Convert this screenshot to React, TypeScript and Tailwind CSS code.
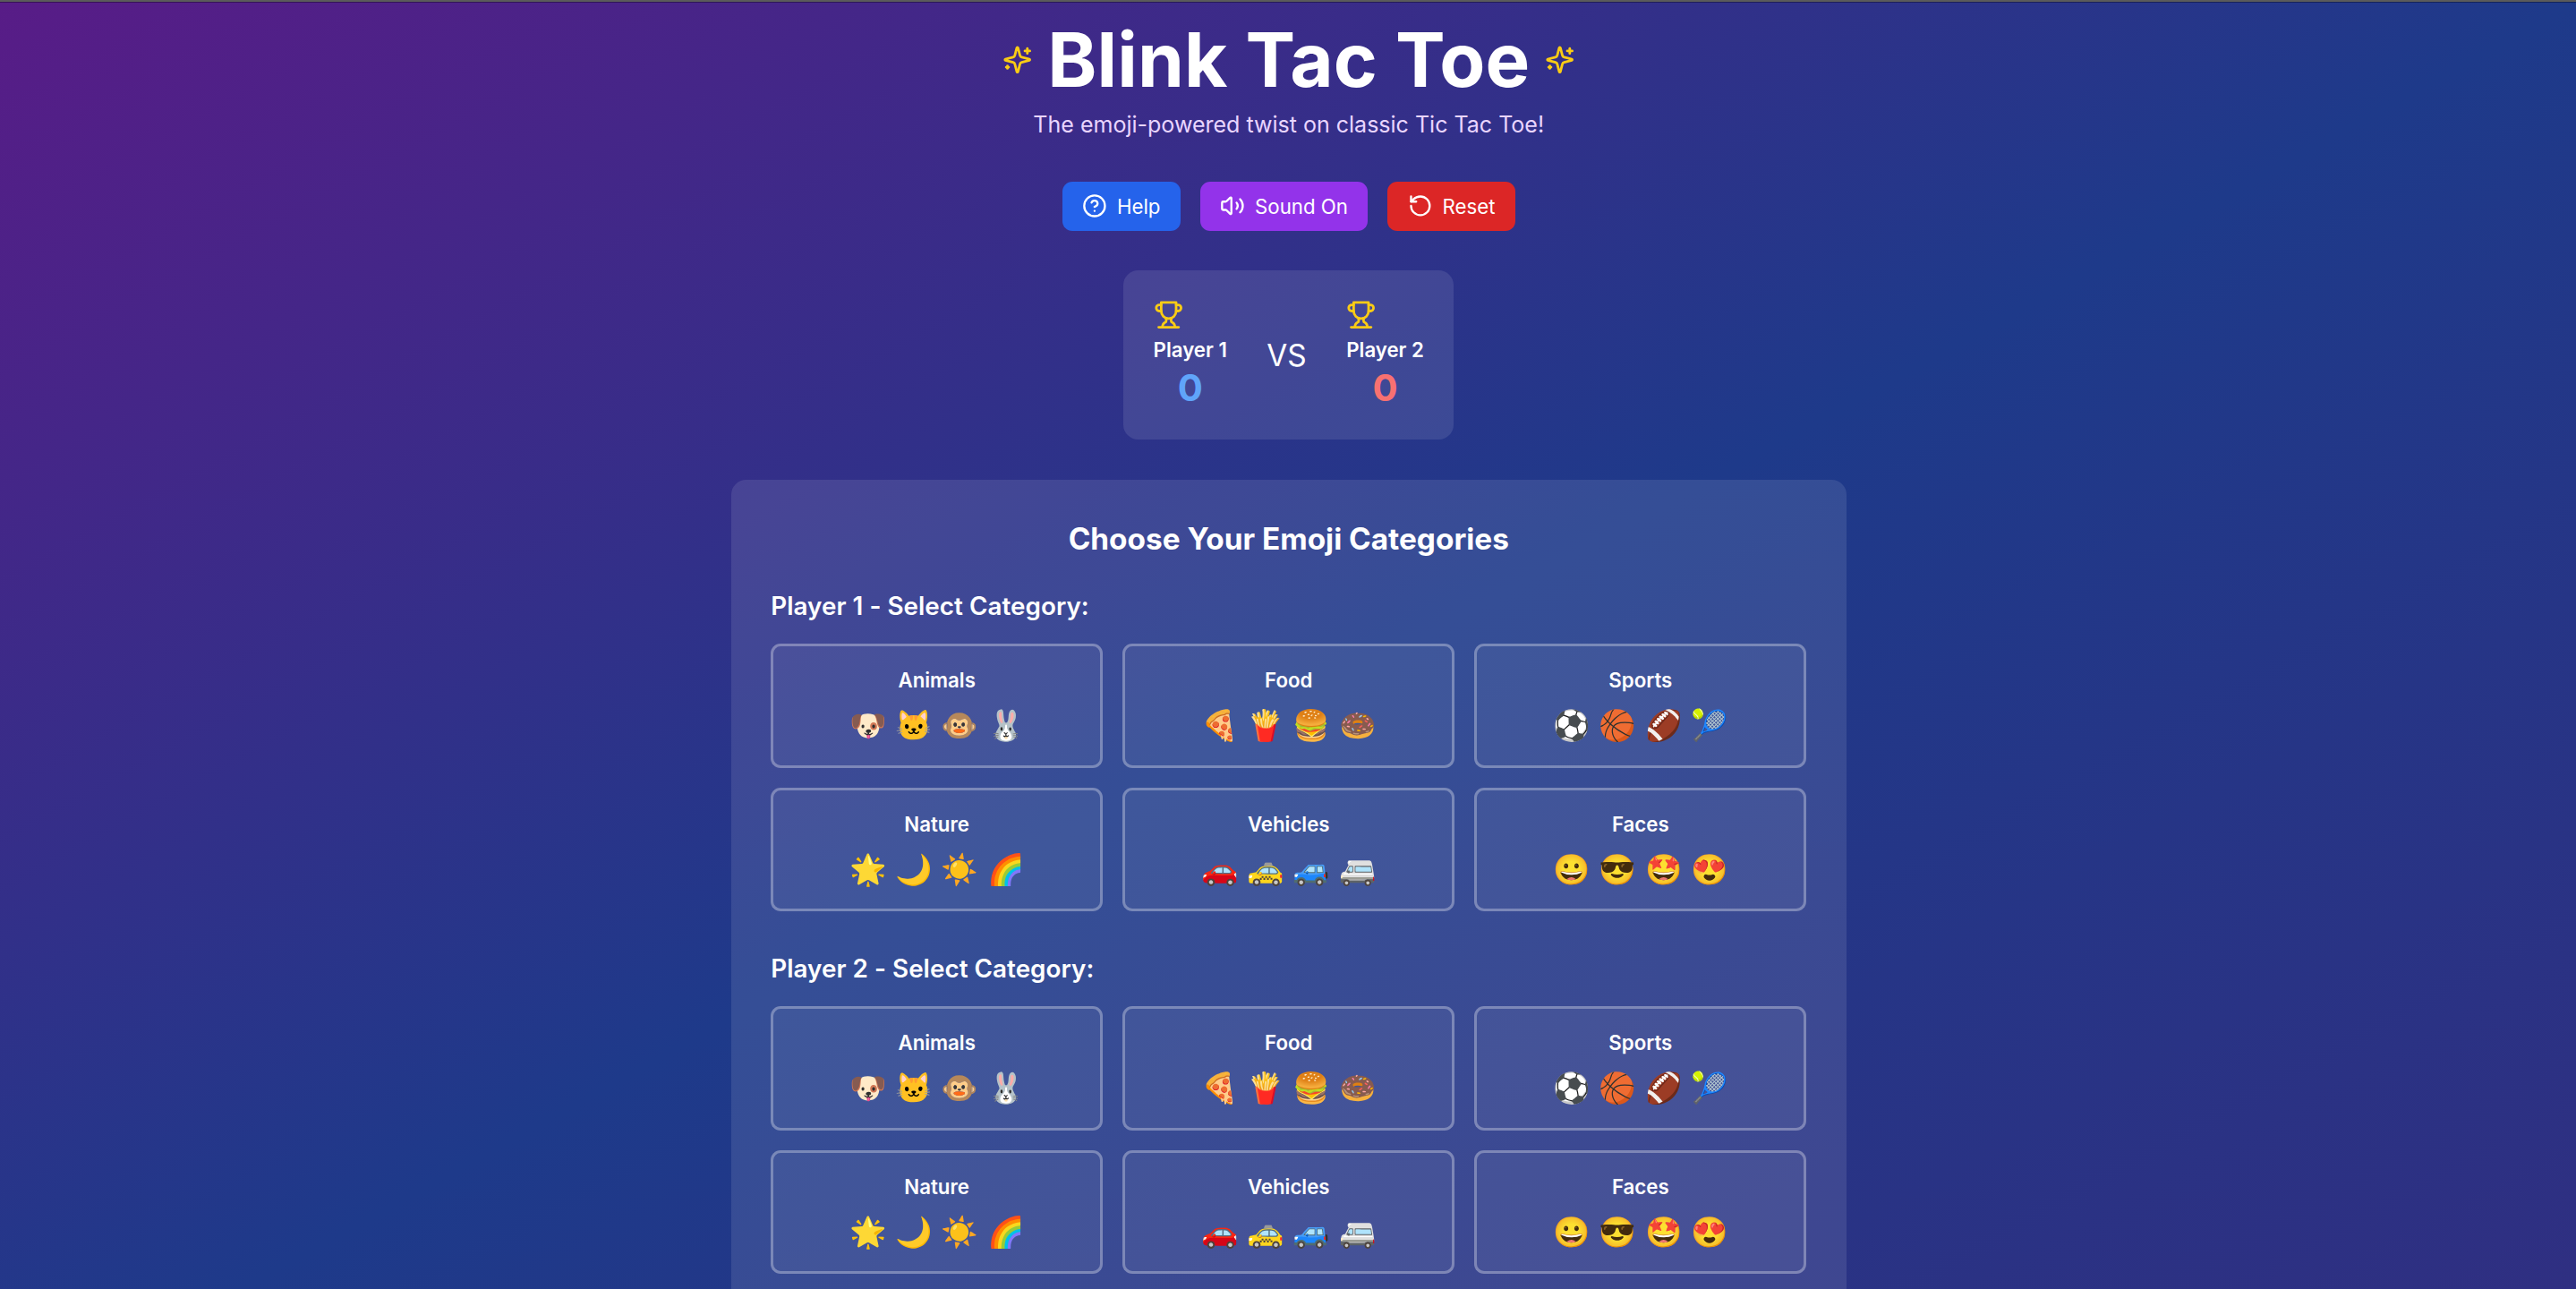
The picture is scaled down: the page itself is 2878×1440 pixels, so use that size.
import { CircleHelp, Volume2, RotateCcw } from "lucide-react";

const CATEGORIES = [
  { name: "Animals", emojis: ["🐶", "🐱", "🐵", "🐰"] },
  { name: "Food", emojis: ["🍕", "🍟", "🍔", "🍩"] },
  { name: "Sports", emojis: ["⚽", "🏀", "🏈", "🎾"] },
  { name: "Nature", emojis: ["🌟", "🌙", "☀️", "🌈"] },
  { name: "Vehicles", emojis: ["🚗", "🚕", "🚙", "🚐"] },
  { name: "Faces", emojis: ["😀", "😎", "🤩", "😍"] },
];

function Sparkles() {
  return (
    <svg viewBox="0 0 24 24" fill="none" stroke="currentColor" strokeWidth="2" strokeLinecap="round" strokeLinejoin="round" className="h-6 w-6 text-[#facc15]">
      <path d="M9.937 15.5A2 2 0 0 0 8.5 14.063l-6.135-1.582a.5.5 0 0 1 0-.962L8.5 9.936A2 2 0 0 0 9.937 8.5l1.582-6.135a.5.5 0 0 1 .963 0L14.063 8.5A2 2 0 0 0 15.5 9.937l6.135 1.581a.5.5 0 0 1 0 .964L15.5 14.063a2 2 0 0 0-1.437 1.437l-1.582 6.135a.5.5 0 0 1-.963 0z" />
      <path d="M20 3v4" />
      <path d="M22 5h-4" />
      <path d="M4 17v2" />
      <path d="M5 18H3" />
    </svg>
  );
}

function Trophy() {
  return (
    <svg viewBox="0 0 24 24" fill="none" stroke="currentColor" strokeWidth="2" strokeLinecap="round" strokeLinejoin="round" className="mb-1 h-6 w-6 text-[#facc15]">
      <path d="M6 9H4.5a2.5 2.5 0 0 1 0-5H6" />
      <path d="M18 9h1.5a2.5 2.5 0 0 0 0-5H18" />
      <path d="M4 22h16" />
      <path d="M10 14.66V17c0 .55-.47.98-.97 1.21C7.85 18.75 7 20.24 7 22" />
      <path d="M14 14.66V17c0 .55.47.98.97 1.21C16.15 18.75 17 20.24 17 22" />
      <path d="M18 2H6v7a6 6 0 0 0 12 0V2Z" />
    </svg>
  );
}

function Score({ name, value, tone }: { name: string; value: number; tone: string }) {
  return (
    <div className="text-center">
      <Trophy />
      <p className="font-semibold">{name}</p>
      <p className={`text-3xl font-bold ${tone}`}>{value}</p>
    </div>
  );
}

function CategoryPicker({ player }: { player: number }) {
  return (
    <section>
      <h3 className="mb-4 text-xl font-semibold tracking-[0.03px]">Player {player} - Select Category:</h3>
      <div className="grid grid-cols-3 gap-4">
        {CATEGORIES.map((c) => (
          <button key={c.name} className="h-[99.6px] rounded-lg border-[2.2px] border-white/30 bg-white/5 px-4 pb-[0.8px] text-center">
            <p className="mb-[8.4px] font-semibold">{c.name}</p>
            <p className="text-2xl">{c.emojis.join(" ")}</p>
          </button>
        ))}
      </div>
    </section>
  );
}

export default function App() {
  return (
    <div className="h-[1440px] overflow-hidden font-['Inter',sans-serif] text-white">
      <div className="h-[2px] bg-[#5b5b5b]" />
      <div className="h-[1585px] bg-[linear-gradient(to_bottom_right,#581c87,#1e3a8a,#312e81)] pl-[1.5px]">
        <div className="-ml-[2px] h-px bg-black/35" />
        <main className="-mt-px flex flex-col items-center pt-[16.6px] [zoom:1.3906]">
          <header className="mb-8 text-center">
            <div className="mb-[8.6px] flex items-center justify-center gap-3">
              <Sparkles />
              <h1 className="text-6xl leading-none font-bold tracking-[0.1px]">Blink Tac Toe</h1>
              <Sparkles />
            </div>
            <p className="text-lg text-[#e9d5ff]">The emoji-powered twist on classic Tic Tac Toe!</p>
          </header>

          <nav className="-mt-[0.7px] mb-[31.6px] flex justify-center gap-4">
            <button className="flex items-center gap-2 rounded-lg bg-[#2563eb] px-4 py-2">
              <CircleHelp size={20} /> Help
            </button>
            <button className="flex items-center gap-2 rounded-lg bg-[#9333ea] px-4 py-2">
              <Volume2 size={20} /> Sound On
            </button>
            <button className="flex items-center gap-2 rounded-lg bg-[#dc2626] px-4 py-2">
              <RotateCcw size={20} /> Reset
            </button>
          </nav>

          <div className="mb-8 flex items-center gap-8 rounded-xl bg-white/10 p-6">
            <Score name="Player 1" value={0} tone="text-[#60a5fa]" />
            <span className="pt-px text-2xl">VS</span>
            <Score name="Player 2" value={0} tone="text-[#f87171]" />
          </div>

          <div className="w-full max-w-4xl rounded-xl bg-white/10 p-8">
            <h2 className="mb-6 text-center text-2xl font-bold">Choose Your Emoji Categories</h2>
            <div className="space-y-8">
              <CategoryPicker player={1} />
              <CategoryPicker player={2} />
            </div>
          </div>
        </main>
      </div>
    </div>
  );
}
